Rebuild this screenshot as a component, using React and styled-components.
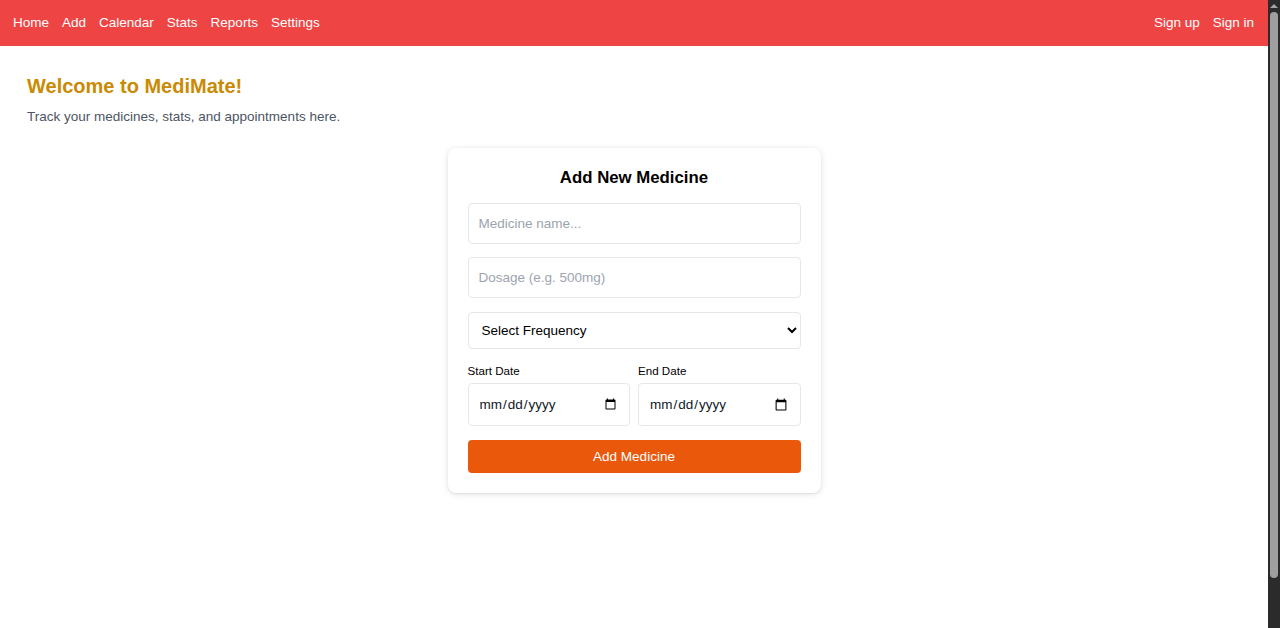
import React, { useState } from 'react';
import styled, { createGlobalStyle } from 'styled-components';

const GlobalStyle = createGlobalStyle`
  * {
    box-sizing: border-box;
  }

  html, body {
    margin: 0;
    padding: 0;
    background: #ffffff;
    font-family: 'Liberation Sans', Arial, sans-serif;
  }
`;

const Page = styled.div`
  padding-right: 12px;
`;

// the browser's dark scrollbar seen at the right edge of the screenshot
const ScrollTrack = styled.div`
  position: fixed;
  top: 0;
  right: 0;
  width: 12px;
  height: 100vh;
  background: #2b2b2b;
  display: flex;
  flex-direction: column;
  align-items: center;
  padding: 2px 0;
`;

const ScrollArrow = styled.div`
  width: 0;
  height: 0;
  border-left: 4px solid transparent;
  border-right: 4px solid transparent;
  border-bottom: 4px solid #a3a3a3;
  margin: 2px 0 4px;
`;

const ScrollThumb = styled.div`
  width: 8px;
  height: 566px;
  border-radius: 4px;
  background: #9f9f9f;
`;

const Nav = styled.nav`
  height: 46px;
  background: #ef4444;
  display: flex;
  align-items: center;
  justify-content: space-between;
  padding: 0 14px 1px 13px;
`;

const NavGroup = styled.div`
  display: flex;
  align-items: center;
  gap: 13px;
`;

const NavLink = styled.a`
  color: #ffffff;
  font-size: 13.5px;
  text-decoration: none;
  cursor: pointer;
`;

const Main = styled.main`
  padding: 28px 27px;
`;

const Title = styled.h1`
  margin: 0;
  font-size: 20px;
  line-height: 24px;
  font-weight: 700;
  color: #ca8a04;
`;

const Subtitle = styled.p`
  margin: 9px 0 0;
  font-size: 13.5px;
  line-height: 20px;
  color: #4b5563;
`;

const Card = styled.form`
  width: 373px;
  margin: 21px auto 0;
  padding: 20px;
  background: #ffffff;
  border-radius: 8px;
  box-shadow: 0 1px 6px rgba(0, 0, 0, 0.12), 0 1px 2px rgba(0, 0, 0, 0.06);
  display: flex;
  flex-direction: column;
  gap: 13px;
`;

const CardTitle = styled.h2`
  margin: 0 0 2px;
  text-align: center;
  font-size: 16.8px;
  line-height: 20px;
  font-weight: 700;
  color: #000000;
`;

const Field = styled.input`
  height: ${(p) => p.h || 41}px;
  width: 100%;
  padding: 0 10px;
  border: 1px solid #e5e7eb;
  border-radius: 4px;
  font-family: inherit;
  font-size: 13.5px;
  color: #111827;
  background: #ffffff;
  outline: none;

  &::placeholder {
    color: #9ca3af;
  }
`;

const Select = styled.select`
  height: 37px;
  width: 100%;
  margin-top: 1px;
  padding: 0 9px;
  border: 1px solid #e5e7eb;
  border-radius: 4px;
  font-family: inherit;
  font-size: 13.5px;
  color: #000000;
  background: #ffffff;
  outline: none;
`;

const DateRow = styled.div`
  display: grid;
  grid-template-columns: 1fr 1fr;
  gap: 8px;
  margin-top: 2px;
`;

const DateCol = styled.label`
  display: flex;
  flex-direction: column;
  gap: 6px;
  font-size: 11.6px;
  line-height: 13px;
  color: #000000;
`;

const SubmitButton = styled.button`
  height: 33px;
  width: 100%;
  margin-top: 1px;
  border: none;
  border-radius: 4px;
  background: #ea580c;
  color: #ffffff;
  font-family: inherit;
  font-size: 13.5px;
  cursor: pointer;
`;

const leftLinks = ['Home', 'Add', 'Calendar', 'Stats', 'Reports', 'Settings'];
const rightLinks = ['Sign up', 'Sign in'];

const App = () => {
  const [name, setName] = useState('');
  const [dosage, setDosage] = useState('');
  const [frequency, setFrequency] = useState('');

  return (
    <Page>
      <GlobalStyle />
      <Nav>
        <NavGroup>
          {leftLinks.map((item) => (
            <NavLink key={item}>{item}</NavLink>
          ))}
        </NavGroup>
        <NavGroup>
          {rightLinks.map((item) => (
            <NavLink key={item}>{item}</NavLink>
          ))}
        </NavGroup>
      </Nav>
      <Main>
        <Title>Welcome to MediMate!</Title>
        <Subtitle>Track your medicines, stats, and appointments here.</Subtitle>
        <Card onSubmit={(e) => e.preventDefault()}>
          <CardTitle>Add New Medicine</CardTitle>
          <Field
            placeholder='Medicine name...'
            value={name}
            onChange={(e) => setName(e.target.value)}
          />
          <Field
            placeholder='Dosage (e.g. 500mg)'
            value={dosage}
            onChange={(e) => setDosage(e.target.value)}
          />
          <Select value={frequency} onChange={(e) => setFrequency(e.target.value)}>
            <option value=''>Select Frequency</option>
            <option value='daily'>Once a day</option>
            <option value='twice'>Twice a day</option>
            <option value='thrice'>Three times a day</option>
          </Select>
          <DateRow>
            <DateCol>
              Start Date
              <Field type='date' h={43} />
            </DateCol>
            <DateCol>
              End Date
              <Field type='date' h={43} />
            </DateCol>
          </DateRow>
          <SubmitButton type='submit'>Add Medicine</SubmitButton>
        </Card>
      </Main>
      <ScrollTrack>
        <ScrollArrow />
        <ScrollThumb />
      </ScrollTrack>
    </Page>
  );
};

export default App;
